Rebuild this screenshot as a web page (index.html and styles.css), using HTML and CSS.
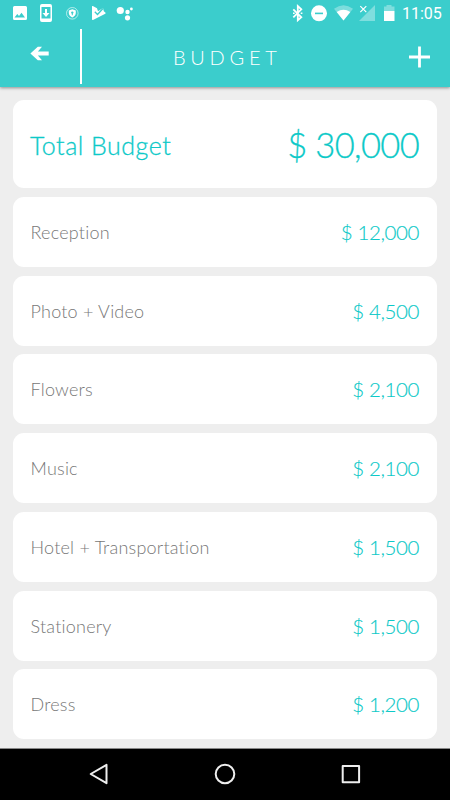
FILE: index.html
```html
<!DOCTYPE html>
<html lang="en">
<head>
<meta charset="utf-8">
<title>Budget</title>
<link rel="stylesheet" href="styles.css">
</head>
<body>
<div class="app">
  <header class="header">
    <div class="status">
      <svg class="status-icons" width="140" height="28" viewBox="0 0 140 28" fill="#fff">
        <path fill-rule="evenodd" d="M14.500 6h11q1.500 0 1.500 1.500v11q0 1.500-1.500 1.500h-11q-1.500 0-1.500-1.500v-11q0-1.500 1.500-1.500zM14.500 17.500h10.500l-3.500-4.700-2.500 3.200-1.700-2z"/>
        <path fill-rule="evenodd" d="M42 4h8q2 0 2 2v14q0 2-2 2h-8q-2 0-2-2V6q0-2 2-2zM41.500 7v11.500h9V7z"/>
        <path d="M45 9h2v4h2.500L46 17l-3.500-4H45z"/>
        <circle cx="72.300" cy="13.300" r="5.800" fill="none" stroke="#fff" stroke-opacity=".75" stroke-width=".8"/>
        <path fill-rule="evenodd" d="M72.300 9.200l3.500 1.200v2.700q0 2.900-3.500 4.400-3.500-1.500-3.500-4.400v-2.700zM72.300 11.400a1.200 1.200 0 0 0-.5 2.300v1.500h1v-1.500a1.200 1.200 0 0 0-.5-2.300z"/>
        <path d="M92 6.500q0-.8.8-.5l4.200 2.300 1 3 3.500-2.300 1.500-1 .8 3.300 1.500 1.200q.8.600 0 1.200L93 20q-1 .3-1-.7z"/>
        <path d="M94.800 11.800l2.700 2.700 5.500-6" fill="none" stroke="#3bcdcc" stroke-width="1.300"/>
        <circle cx="120.300" cy="10.500" r="3.600"/><circle cx="127.500" cy="12" r="2.200"/><circle cx="131.400" cy="9" r="1.400"/><circle cx="127.500" cy="17.800" r="2.600"/>
      </svg>
      <svg class="status-icons" width="110" height="28" viewBox="290 0 110 28" fill="#fff">
        <path d="M293.300 9.300l8 8-3.500 3V6l3.500 3.300-8 8" fill="none" stroke="#fff" stroke-width="1.800"/>
        <path d="M293 12.400h1.700v1.700H293zM300.700 12.400h1.700v1.700h-1.700z"/>
        <circle cx="319" cy="13.300" r="8"/><path d="M315 12.600h8v1.600h-8z" fill="#3bcdcc"/>
        <path d="M334 8.700q9.500-7 19 0L343.500 20.500z" fill-opacity=".33"/>
        <path d="M336.700 12q6.800-4.300 13.600 0L343.500 20.500z"/>
        <path d="M375 5v16h-16z" fill-opacity=".35"/>
        <path d="M360.300 6.200l6 6M366.300 6.200l-6 6" stroke="#fff" stroke-width="1.200"/>
        <path d="M384 6.500h2.500V5h5v1.500h3V11H384z" fill-opacity=".35"/><path d="M384 11h10.500v10H384z"/>
      </svg>
      <span class="clock">11:05</span>
    </div>
    <div class="toolbar">
      <div class="back">
        <svg width="20" height="16" viewBox="0 0 20 16"><path d="M.4 7.500L7.800 .8h4.200L7.900 5.600H18.700v3.800H7.900l4.100 4.800H7.800z" fill="#fff"/></svg>
      </div>
      <h1 class="title">BUDGET</h1>
      <svg class="add" width="22" height="22" viewBox="0 0 22 22"><path d="M11.500 .5v21M1 11h21" stroke="#fff" stroke-width="2.800"/></svg>
    </div>
  </header>
  <main class="list">
    <section class="card total"><span class="name">Total Budget</span><span class="amount">$ 30,000</span></section>
    <section class="card"><span class="name">Reception</span><span class="amount">$ 12,000</span></section>
    <section class="card"><span class="name">Photo + Video</span><span class="amount">$ 4,500</span></section>
    <section class="card"><span class="name">Flowers</span><span class="amount">$ 2,100</span></section>
    <section class="card"><span class="name">Music</span><span class="amount">$ 2,100</span></section>
    <section class="card"><span class="name">Hotel + Transportation</span><span class="amount">$ 1,500</span></section>
    <section class="card"><span class="name">Stationery</span><span class="amount">$ 1,500</span></section>
    <section class="card"><span class="name">Dress</span><span class="amount">$ 1,200</span></section>
  </main>
  <nav class="navbar">
    <svg width="20" height="22" viewBox="0 0 20 22"><path d="M17.500 1.800v18.400L1.700 11z"/></svg>
    <svg width="22" height="22" viewBox="0 0 22 22"><circle cx="11" cy="11" r="9.300"/></svg>
    <svg width="20" height="22" viewBox="0 0 20 22"><path d="M1.700 2.900h16.400v16.400H1.700z"/></svg>
  </nav>
</div>
</body>
</html>
```

FILE: styles.css
```css
* { box-sizing: border-box; }
body { margin: 0; font-family: Lato, "Liberation Sans", sans-serif; font-weight: 300; }
.app { width: 450px; height: 800px; display: flex; flex-direction: column; background: #eee; overflow: hidden; }
.header { height: 87px; flex: none; background: #3bcdcc; box-shadow: 0 1px 3px rgba(0, 0, 0, .4); color: #fff; }
.status { height: 28px; display: flex; }
.status-icons + .status-icons { margin-left: 150px; }
.status-icons { flex: none; }
.clock { margin-left: 2px; font: 400 16px/28px Roboto, sans-serif; }
.toolbar { height: 56px; display: flex; align-items: center; padding-right: 20px; }
.back { width: 82px; height: 55px; padding: 17px 0 0 30px; border-right: 2px solid #fff; margin-top: 1px; }
.title { margin: 2px 0 0 91px; font-size: 20px; font-weight: 300; letter-spacing: 4.700px; line-height: 24px; }
.add { margin: 2px 0 0 auto; }
.list { flex: none; height: 660.500px; padding: 13px 13px 0; display: flex; flex-direction: column; gap: 8.750px; }
.card { height: 70px; flex: none; display: flex; align-items: center; justify-content: space-between; padding: 0 18px 0 17.500px; border-radius: 11px; background: #fff; white-space: nowrap; }
.name { font-size: 18px; color: #777; letter-spacing: .22px; }
.amount { font-size: 20.500px; color: #0cc9c8; letter-spacing: -.4px; -webkit-text-stroke: .15px #0cc9c8; }
.total { height: 88px; padding-top: 1px; padding-left: 17px; }
.total .name { font-size: 25px; color: #0cc9c8; letter-spacing: .5px; -webkit-text-stroke: .3px #0cc9c8; }
.total .amount { font-size: 34.500px; letter-spacing: -.65px; -webkit-text-stroke: .3px #0cc9c8; }
.navbar { flex: 1; border-top: 1px solid #888; background: #000; display: flex; justify-content: space-between; align-items: center; padding: 0 89px 0 89px; }
.navbar svg { fill: none; stroke: #eee; stroke-width: 2; stroke-linejoin: round; }
```
